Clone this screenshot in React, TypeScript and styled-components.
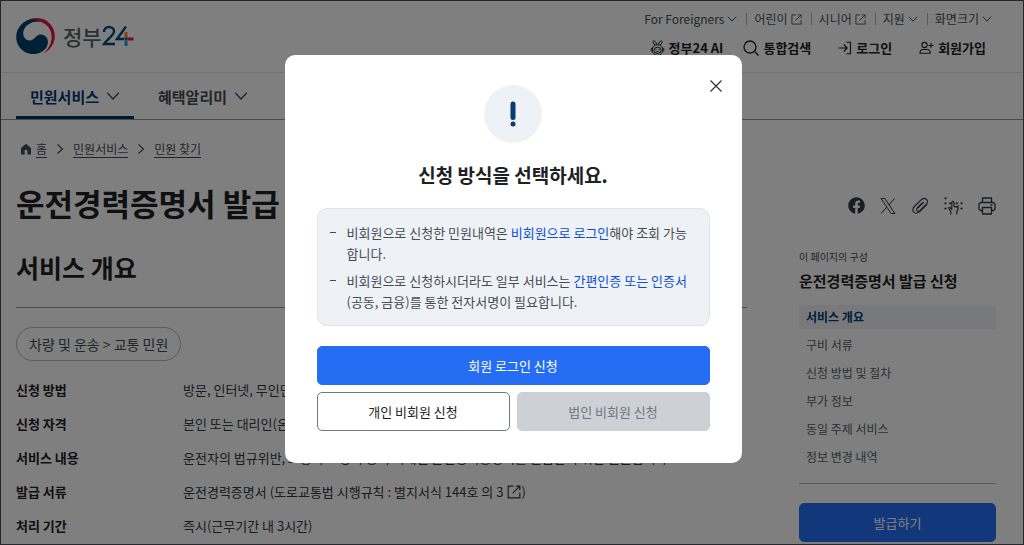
import React from 'react';
import styled, { createGlobalStyle, css } from 'styled-components';
import { FaFacebook } from 'react-icons/fa';

const GlobalStyle = createGlobalStyle`
  *, *::before, *::after { box-sizing: border-box; }
  body {
    margin: 0;
    background: #fff;
    color: #1e2124;
    font-family: "Noto Sans CJK KR", sans-serif;
    font-size: 13px;
  }
  button { font-family: inherit; cursor: pointer; }
  a { color: inherit; text-decoration: none; }
  h1, h2, h3, p, ul, ol, dl, dd { margin: 0; padding: 0; }
  ul, ol { list-style: none; }
`;

const Page = styled.div`
  min-height: 100vh;
  display: flex;
  flex-direction: column;
`;

const Header = styled.header`
  display: flex;
  justify-content: space-between;
  height: 73px;
  padding: 0 32px 0 16px;
  border-bottom: 1px solid #e6e8ea;
`;

const Brand = styled.a`
  display: flex;
  align-items: center;
  gap: 8px;
  font-size: 21px;
  font-weight: 500;
  line-height: 32px;
  color: #58616a;
`;

const BrandName = styled.span`
  display: flex;
  align-items: center;
`;

const HeaderTools = styled.div`
  display: flex;
  flex-direction: column;
  align-items: flex-end;
  gap: 10px;
  padding-top: 10px;
`;

const UtilityList = styled.ul`
  display: flex;
  align-items: center;
  line-height: 18px;
  font-size: 12px;
  color: #464c53;

  li + li {
    display: flex;
    align-items: center;
  }
  li + li::before {
    content: '';
    height: 12px;
    margin: 0 7px 0 9px;
    border-left: 1px solid #b1b8be;
  }
`;

const UtilityLink = styled.a`
  display: flex;
  align-items: center;
  gap: 3px;
`;

const ActionList = styled.ul`
  display: flex;
  gap: 27px;
  padding-right: 6px;
  line-height: 20px;
  font-weight: 700;
  font-size: 13px;

  li:nth-child(2) { margin-left: -7px; }
`;

const ActionLink = styled.a`
  display: flex;
  align-items: center;
  gap: 4px;
`;

const MainNav = styled.nav`
  display: flex;
  gap: 10px;
  height: 47px;
  padding: 0 16px;
  border-bottom: 1px solid #8a949e;
`;

const NavItem = styled.a<{ $active?: boolean }>`
  display: flex;
  align-items: center;
  gap: 7px;
  padding: 3px 14px 0;
  font-size: 15px;
  font-weight: 700;
  color: ${(p) => (p.$active ? '#003675' : '#464c53')};
  border-bottom: 3px solid ${(p) => (p.$active ? '#003675' : 'transparent')};

  svg { color: #464c53; }
`;

const Breadcrumb = styled.ol`
  display: flex;
  align-items: center;
  gap: 7px;
  padding: 20px 20px 0;
  font-size: 12px;
  line-height: 20px;
  color: #464c53;

  li {
    display: flex;
    align-items: center;
    gap: 4px;
  }
  li + li { gap: 7px; }
  a {
    line-height: 17px;
    border-bottom: 1px solid #464c53;
  }
`;

const Columns = styled.main`
  display: grid;
  grid-template-columns: minmax(0, 1fr) 197px;
  column-gap: 52px;
  padding: 0 28px 0 16px;
`;

const PageTitle = styled.h1`
  margin-top: 22px;
  font-size: 31px;
  line-height: 46px;
  font-weight: 700;
`;

const SectionTitle = styled.h2`
  margin-top: 23px;
  padding-bottom: 22px;
  font-size: 25px;
  line-height: 36px;
  font-weight: 700;
  border-bottom: 1px solid #8a949e;
`;

const Chip = styled.span`
  display: inline-block;
  margin-top: 19px;
  padding: 0 12px;
  font-size: 14px;
  line-height: 32px;
  color: #464c53;
  border: 1px solid #b1b8be;
  border-radius: 17px;
`;

const InfoList = styled.dl`
  display: grid;
  grid-template-columns: 167px minmax(0, 1fr);
  row-gap: 14px;
  margin-top: 19px;
  line-height: 20px;
  font-size: 13px;

  dt { font-weight: 700; }
  dd {
    display: flex;
    align-items: center;
    white-space: nowrap;
    color: #33363d;
  }
  svg { margin-left: 4px; }
`;

const Side = styled.aside`
  display: flex;
  flex-direction: column;
`;

const ShareList = styled.ul`
  display: flex;
  justify-content: flex-end;
  gap: 15px;
  padding-top: 39px;
  color: #33363d;

  button {
    display: block;
    padding: 0;
    border: 0;
    background: none;
    color: inherit;
  }
  svg { display: block; }
`;

const SideCaption = styled.p`
  margin-top: 33px;
  font-size: 10px;
  line-height: 18px;
  color: #464c53;
`;

const SideTitle = styled.h3`
  margin-top: 4px;
  font-size: 15px;
  line-height: 22px;
  font-weight: 700;
`;

const SideNav = styled.ul`
  display: flex;
  flex-direction: column;
  gap: 4px;
  margin-top: 13px;
  padding-bottom: 14px;
  border-bottom: 1px solid #b1b8be;
`;

const SideLink = styled.a<{ $active?: boolean }>`
  display: block;
  padding: 0 7px;
  font-size: 12px;
  line-height: 24px;
  color: #58616a;
  ${(p) =>
    p.$active &&
    css`
      font-weight: 700;
      color: #063a74;
      background: #eef2f7;
    `}
`;

const Button = styled.button<{ $kind: 'primary' | 'outline' | 'disabled' }>`
  flex: 1;
  height: 39px;
  padding: 0;
  font-size: 13px;
  line-height: 20px;
  font-weight: 400;
  border-radius: 5px;
  ${(p) =>
    p.$kind === 'primary' &&
    css`
      color: #fff;
      background: #256ef4;
      border: 1px solid #256ef4;
    `}
  ${(p) =>
    p.$kind === 'outline' &&
    css`
      color: #1e2124;
      background: #fff;
      border: 1px solid #6d7882;
    `}
  ${(p) =>
    p.$kind === 'disabled' &&
    css`
      color: #6d7882;
      background: #cdd1d5;
      border: 1px solid #cdd1d5;
      cursor: default;
    `}
`;

const SideAction = styled.div`
  display: flex;
  margin-top: 19px;
`;

const Overlay = styled.div`
  position: fixed;
  inset: 0;
  display: flex;
  justify-content: center;
  align-items: flex-start;
  padding: 54px 0 0 2px;
  background: rgba(0, 0, 0, 0.5);
  border: 1px solid #262729;
`;

const Dialog = styled.section`
  position: relative;
  display: flex;
  flex-direction: column;
  width: 457px;
  max-width: 100%;
  padding: 30px 32px 32px;
  background: #fff;
  border-radius: 10px;
`;

const CloseButton = styled.button`
  position: absolute;
  top: 22px;
  right: 17px;
  padding: 0;
  border: 0;
  background: none;
  color: #33363d;

  svg { display: block; }
`;

const Badge = styled.div`
  align-self: center;
  display: grid;
  place-items: center;
  width: 58px;
  height: 58px;
  border-radius: 50%;
  background: #eef2f7;
`;

const DialogTitle = styled.h2`
  margin-top: 18px;
  font-size: 19px;
  line-height: 28px;
  font-weight: 700;
  text-align: center;
`;

const Notice = styled.ul`
  display: flex;
  flex-direction: column;
  gap: 6px;
  margin-top: 19px;
  padding: 13px 12px;
  color: #464c53;
  background: #eef2f7;
  border: 1px solid #dfe4ea;
  border-radius: 10px;

  li {
    display: flex;
    gap: 11px;
    font-size: 13px;
    line-height: 21px;
    word-break: break-all;
  }
  li::before {
    content: '';
    flex: none;
    width: 6px;
    height: 1px;
    margin-top: 10px;
    background: #464c53;
  }
  em {
    font-style: normal;
    color: #0b50d0;
  }
`;

const DialogActions = styled.div`
  display: flex;
  flex-direction: column;
  gap: 7px;
  margin-top: 20px;
`;

const ButtonRow = styled.div`
  display: flex;
  gap: 7px;
`;

const Chevron = ({ size = 10, right = false }: { size?: number; right?: boolean }) => (
  <svg width={size} height={size} viewBox="0 0 12 12" fill="none" stroke="currentColor" strokeWidth="1.200">
    <path d={right ? 'M3.500 1.500L8.500 6l-5 4.500' : 'M1 3.200L6 8.600l5-5.400'} />
  </svg>
);

const External = ({ size = 11 }: { size?: number }) => (
  <svg width={size} height={size} viewBox="0 0 12 12" fill="none" stroke="currentColor" strokeWidth="1">
    <path d="M5.500 1H1v10h10V6.500M7.500 1H11v3.500M11 1L5 7" />
  </svg>
);

const Emblem = () => (
  <svg width="39" height="39" viewBox="0 0 39 39">
    <path d="M5 9.500C10 1 22-1.500 30.500 3.800 39.500 9.700 42 23 34 31.500c-2 2.200-4 3.800-6.500 4.900C34 30.500 37.500 22.500 34.500 14 31 5 21 2.500 13.500 5.500 9.500 7 7 9.500 6.800 12z" fill="#e6173a" />
    <path d="M5.300 7.500C-.5 13.500-1.500 22.500 3 29.500c5 7.500 15 9.600 22.500 5.500 4.500-2.400 7-7 6.300-11.500-.8-4.500-5.300-7-9.500-5.500-3 1.200-4 4.500-7 5.300-4 1-7.500-2-8-5.800C6.700 13 9 9.500 13 7 17 4.500 21 4 24 4.800 18 0 9.500 2.500 5.300 7.500z" fill="#004170" />
  </svg>
);

const Number24 = () => (
  <svg width="32" height="22" viewBox="0 0 32 22" fill="none" role="img" aria-label="24">
    <path d="M2 7C2 3.800 4 2 7 2s5 1.800 5 4.500C12 10.500 5 14 2 19h11" stroke="#004a80" strokeWidth="2.400" />
    <path d="M24 1.500L15 14h7" stroke="#004a80" strokeWidth="2.400" />
    <path d="M24 7v6" stroke="#f08a24" strokeWidth="3" />
    <path d="M22.500 14h3" stroke="#603a80" strokeWidth="3" />
    <path d="M25.500 14h6" stroke="#e6173a" strokeWidth="3" />
    <path d="M24 15.500V21" stroke="#1aa5d8" strokeWidth="3" />
  </svg>
);

const Bear = () => (
  <svg width="15" height="16" viewBox="0 0 15 16" fill="none" stroke="currentColor" strokeWidth="1">
    <path d="M5.200 4.800C3 4 2.300 1.500 3.500 1S6.300 2 6.500 4.500M9.800 4.800c2.200-.8 2.900-3.300 1.700-3.800S8.700 2 8.500 4.500" />
    <circle cx="7.500" cy="10" r="5.300" />
    <ellipse cx="7.500" cy="10.300" rx="3.600" ry="3" />
    <path d="M2.500 8C.5 8 .5 11 2.300 11.500M12.500 8c2 0 2 3 .2 3.500" />
    <path d="M6 9.300v1M9 9.300v1M6.500 11.700h2" />
  </svg>
);

const Search = () => (
  <svg width="16" height="16" viewBox="0 0 16 16" fill="none" stroke="currentColor" strokeWidth="1.300">
    <circle cx="7" cy="7" r="6" />
    <path d="M11.300 11.300l4.200 4.200" />
  </svg>
);

const Login = () => (
  <svg width="14" height="14" viewBox="0 0 14 14" fill="none" stroke="currentColor" strokeWidth="1.100">
    <path d="M.5 7H9M5.800 3.500L9.200 7l-3.400 3.500M8.500 1.200h4v11.600h-4" />
  </svg>
);

const Join = () => (
  <svg width="15" height="14" viewBox="0 0 15 14" fill="none" stroke="currentColor" strokeWidth="1.100">
    <circle cx="5.500" cy="4" r="2.600" />
    <path d="M4 8.500h4c2 0 3.300 1.700 3.300 3.800H1C1 10 2 8.500 4 8.500zM9.500 4.500h5M12 2v5" />
  </svg>
);

const Home = () => (
  <svg width="12" height="12" viewBox="0 0 12 12" fill="currentColor">
    <path d="M6 .8L1 5v6.500h3.600V8c0-.8.500-1.200 1.400-1.200S7.400 7.200 7.400 8v3.500H11V5z" />
  </svg>
);

const XLogo = () => (
  <svg width="16" height="18" viewBox="0 0 16 18" fill="none" stroke="currentColor" strokeWidth="1">
    <path d="M1 1.500h3.800l10.200 15h-3.800zM14.500 1.500L8.800 8M6.800 10.200L1 16.500" />
  </svg>
);

const Clip = () => (
  <svg width="18" height="18" viewBox="0 0 18 18" fill="none" stroke="currentColor" strokeWidth="1.100" strokeLinecap="round">
    <path d="M15.800 7.600l-6.600 6.600c-1.700 1.700-4.500 2.600-6.200 1.200-1.800-1.600-1.400-4.100.4-5.900l6.400-6.300c1.600-1.600 4.100-2.400 5.700-.9 1.600 1.600 1.100 3.700-.4 5.200l-5.700 5.600c-1 1-2.400 1.500-3.300.7-.9-.9-.6-2.100.4-3.100l4.800-4.700" />
    <path d="M12.600 5.400l-5.500 5.500" />
  </svg>
);

const Braille = () => (
  <svg width="19" height="18" viewBox="0 0 19 18" fill="none" stroke="currentColor" strokeWidth="1.200" strokeLinejoin="round">
    <g fill="currentColor" stroke="none">
      <circle cx="1.500" cy="1.300" r="1.100" />
      <circle cx="1.500" cy="6.300" r="1.100" />
      <circle cx="1.500" cy="11.500" r="1.100" />
      <circle cx="6" cy="6.300" r="1.100" />
      <circle cx="13" cy="6.300" r="1.100" />
      <circle cx="17.500" cy="6.300" r="1.100" />
      <circle cx="17.500" cy="11.500" r="1.100" />
    </g>
    <path d="M6.800 17.500v-2.700L4.800 11.500c-.4-1 .6-1.600 1.300-.9l1.700 1.700V5.500c0-1.500 2.200-1.500 2.200 0v3.800l3 .8c1 .3 1.300 1 1.100 2l-1.300 3v2.400M12.500 10.200l2.500-1.700" />
  </svg>
);

const Printer = () => (
  <svg width="18" height="18" viewBox="0 0 18 18" fill="none" stroke="currentColor" strokeWidth="1.300" strokeLinejoin="round">
    <path d="M4.500 5.500V1h9v4.500M4.500 13.500H2.500L1 12V7l1.500-1.500h13L17 7v5l-1.500 1.500h-2" />
    <path d="M4.500 10.500h9V17h-9zM12.500 8h2" />
  </svg>
);

const utilities = [
  { label: 'For Foreigners', icon: <Chevron /> },
  { label: '어린이', icon: <External /> },
  { label: '시니어', icon: <External /> },
  { label: '지원', icon: <Chevron /> },
  { label: '화면크기', icon: <Chevron /> },
];

const actions = [
  { label: '정부24 AI', icon: <Bear /> },
  { label: '통합검색', icon: <Search /> },
  { label: '로그인', icon: <Login /> },
  { label: '회원가입', icon: <Join /> },
];

const details: { term: string; text: React.ReactNode }[] = [
  { term: '신청 방법', text: '방문, 인터넷, 무인민원발급기' },
  { term: '신청 자격', text: '본인 또는 대리인(온라인은 본인만 가능)' },
  { term: '서비스 내용', text: '운전자의 법규위반, 교통사고 경력 등이 기재된 운전경력증명서를 발급받기 위한 민원입니다.' },
  { term: '발급 서류', text: <>운전경력증명서 (도로교통법 시행규칙 : 별지서식 144호 의 3 <External size={14} />)</> },
  { term: '처리 기간', text: '즉시(근무기간 내 3시간)' },
];

const shares = [
  { label: '페이스북', icon: <FaFacebook size={17} /> },
  { label: '엑스', icon: <XLogo /> },
  { label: '링크 복사', icon: <Clip /> },
  { label: '점자', icon: <Braille /> },
  { label: '인쇄', icon: <Printer /> },
];

const sections = ['서비스 개요', '구비 서류', '신청 방법 및 절차', '부가 정보', '동일 주제 서비스', '정보 변경 내역'];

export default function App() {
  return (
    <>
      <GlobalStyle />
      <Page>
        <Header>
          <Brand href="#">
            <Emblem />
            <BrandName>정부<Number24 /></BrandName>
          </Brand>
          <HeaderTools>
            <UtilityList>
              {utilities.map((u) => (
                <li key={u.label}>
                  <UtilityLink href="#">{u.label}{u.icon}</UtilityLink>
                </li>
              ))}
            </UtilityList>
            <ActionList>
              {actions.map((a) => (
                <li key={a.label}>
                  <ActionLink href="#">{a.icon}{a.label}</ActionLink>
                </li>
              ))}
            </ActionList>
          </HeaderTools>
        </Header>
        <MainNav>
          <NavItem href="#" $active>민원서비스<Chevron size={14} /></NavItem>
          <NavItem href="#">혜택알리미<Chevron size={14} /></NavItem>
        </MainNav>
        <Breadcrumb>
          <li><Home /><a href="#">홈</a></li>
          <li><Chevron right size={12} /><a href="#">민원서비스</a></li>
          <li><Chevron right size={12} /><a href="#">민원 찾기</a></li>
        </Breadcrumb>
        <Columns>
          <article>
            <PageTitle>운전경력증명서 발급 신청</PageTitle>
            <SectionTitle>서비스 개요</SectionTitle>
            <Chip>차량 및 운송 &gt; 교통 민원</Chip>
            <InfoList>
              {details.map((d) => (
                <React.Fragment key={d.term}>
                  <dt>{d.term}</dt>
                  <dd>{d.text}</dd>
                </React.Fragment>
              ))}
            </InfoList>
          </article>
          <Side>
            <ShareList>
              {shares.map((s) => (
                <li key={s.label}>
                  <button type="button" aria-label={s.label}>{s.icon}</button>
                </li>
              ))}
            </ShareList>
            <SideCaption>이 페이지의 구성</SideCaption>
            <SideTitle>운전경력증명서 발급 신청</SideTitle>
            <SideNav>
              {sections.map((s, i) => (
                <li key={s}>
                  <SideLink href="#" $active={i === 0}>{s}</SideLink>
                </li>
              ))}
            </SideNav>
            <SideAction>
              <Button type="button" $kind="primary">발급하기</Button>
            </SideAction>
          </Side>
        </Columns>
      </Page>
      <Overlay>
        <Dialog role="dialog" aria-modal="true" aria-labelledby="dialog-title">
          <CloseButton type="button" aria-label="닫기">
            <svg width="18" height="18" viewBox="0 0 18 18" fill="none" stroke="currentColor" strokeWidth="1.300">
              <path d="M3.500 3.500l11 11M14.500 3.500l-11 11" />
            </svg>
          </CloseButton>
          <Badge>
            <svg width="6" height="26" viewBox="0 0 6 26" fill="#063a74">
              <rect x="0.500" y="0.500" width="5" height="18.500" rx="2.500" />
              <circle cx="3" cy="23" r="2.500" />
            </svg>
          </Badge>
          <DialogTitle id="dialog-title">신청 방식을 선택하세요.</DialogTitle>
          <Notice>
            <li>
              <p>비회원으로 신청한 민원내역은 <em>비회원으로 로그인</em>해야 조회 가능합니다.</p>
            </li>
            <li>
              <p>비회원으로 신청하시더라도 일부 서비스는 <em>간편인증 또는 인증서</em>(공동, 금융)를 통한 전자서명이 필요합니다.</p>
            </li>
          </Notice>
          <DialogActions>
            <ButtonRow>
              <Button type="button" $kind="primary">회원 로그인 신청</Button>
            </ButtonRow>
            <ButtonRow>
              <Button type="button" $kind="outline">개인 비회원 신청</Button>
              <Button type="button" $kind="disabled" disabled>법인 비회원 신청</Button>
            </ButtonRow>
          </DialogActions>
        </Dialog>
      </Overlay>
    </>
  );
}
